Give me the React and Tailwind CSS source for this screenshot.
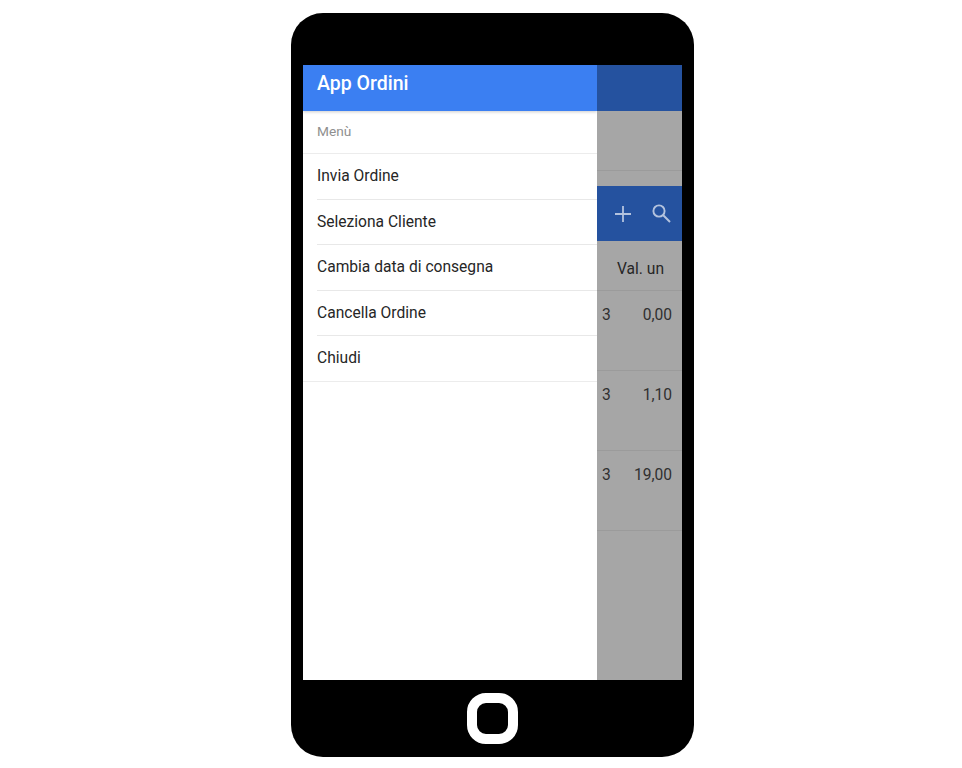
import React from "react";

const items = ["Invia Ordine", "Seleziona Cliente", "Cambia data di consegna", "Cancella Ordine"];
const rows = ["0,00", "1,10", "19,00"];

export default function App() {
  return (
    <div className="w-[962px] h-[768px] bg-white overflow-hidden pt-[13px] pl-[291px] font-['Roboto',sans-serif]">
      <div className="w-[403px] h-[744px] bg-black rounded-[32px] flex flex-col items-center pt-[52px]">
        <div className="w-[379px] h-[615px] flex shrink-0">
          <div className="w-[294px] bg-white flex flex-col">
            <div className="h-[46px] bg-[#3b7ff2] shadow-[0_1px_3px_rgba(0,0,0,0.2)] pl-[14px] pt-[5px] text-white text-[19.5px] leading-[28px] font-medium">
              App Ordini
            </div>
            <div className="h-[43px] pl-[14px] pb-[2px] border-b border-[#ececec] flex items-center text-[13.7px] text-[#8f8f8f]">
              Menù
            </div>
            {items.map((t) => (
              <div key={t} className="h-[45.5px] ml-[14px] pt-[1px] border-b border-[#e8e8e8] flex items-center text-[15.6px] text-[#262626]">
                {t}
              </div>
            ))}
            <div className="h-[45.5px] pl-[14px] pt-[1px] border-b border-[#ececec] flex items-center text-[15.6px] text-[#262626]">
              Chiudi
            </div>
          </div>
          <div className="flex-1 bg-[#a6a6a6] flex flex-col text-[#262626] text-[15.6px]">
            <div className="h-[46px] bg-[#25529f]" />
            <div className="h-[60px] border-b border-[#9b9b9b]" />
            <div className="h-[15px]" />
            <div className="h-[55px] bg-[#25529f] flex items-center text-[#b4c3de]">
              <svg className="ml-[18px]" width="16" height="16" viewBox="0 0 16 16" fill="none" stroke="currentColor" strokeWidth="1.8">
                <path d="M8 0v16M0 8h16" />
              </svg>
              <svg className="ml-[21px]" width="19" height="19" viewBox="0 0 19 19" fill="none" stroke="currentColor" strokeWidth="1.9">
                <circle cx="7" cy="7" r="5.6" />
                <path d="M11 11l7 7" />
              </svg>
            </div>
            <div className="h-[50px] border-b border-[#9b9b9b] flex items-center justify-end pr-[18px] pt-[9px]">Val. un</div>
            {rows.map((v) => (
              <div key={v} className="h-[80px] border-b border-[#9b9b9b] flex justify-between pl-[5px] pr-[10px] pt-[14px] leading-[20px] text-[#303030]">
                <span>3</span>
                <span>{v}</span>
              </div>
            ))}
          </div>
        </div>
        <div className="mt-[13px] w-[51px] h-[51px] border-[10px] border-white rounded-[19px]" />
      </div>
    </div>
  );
}
